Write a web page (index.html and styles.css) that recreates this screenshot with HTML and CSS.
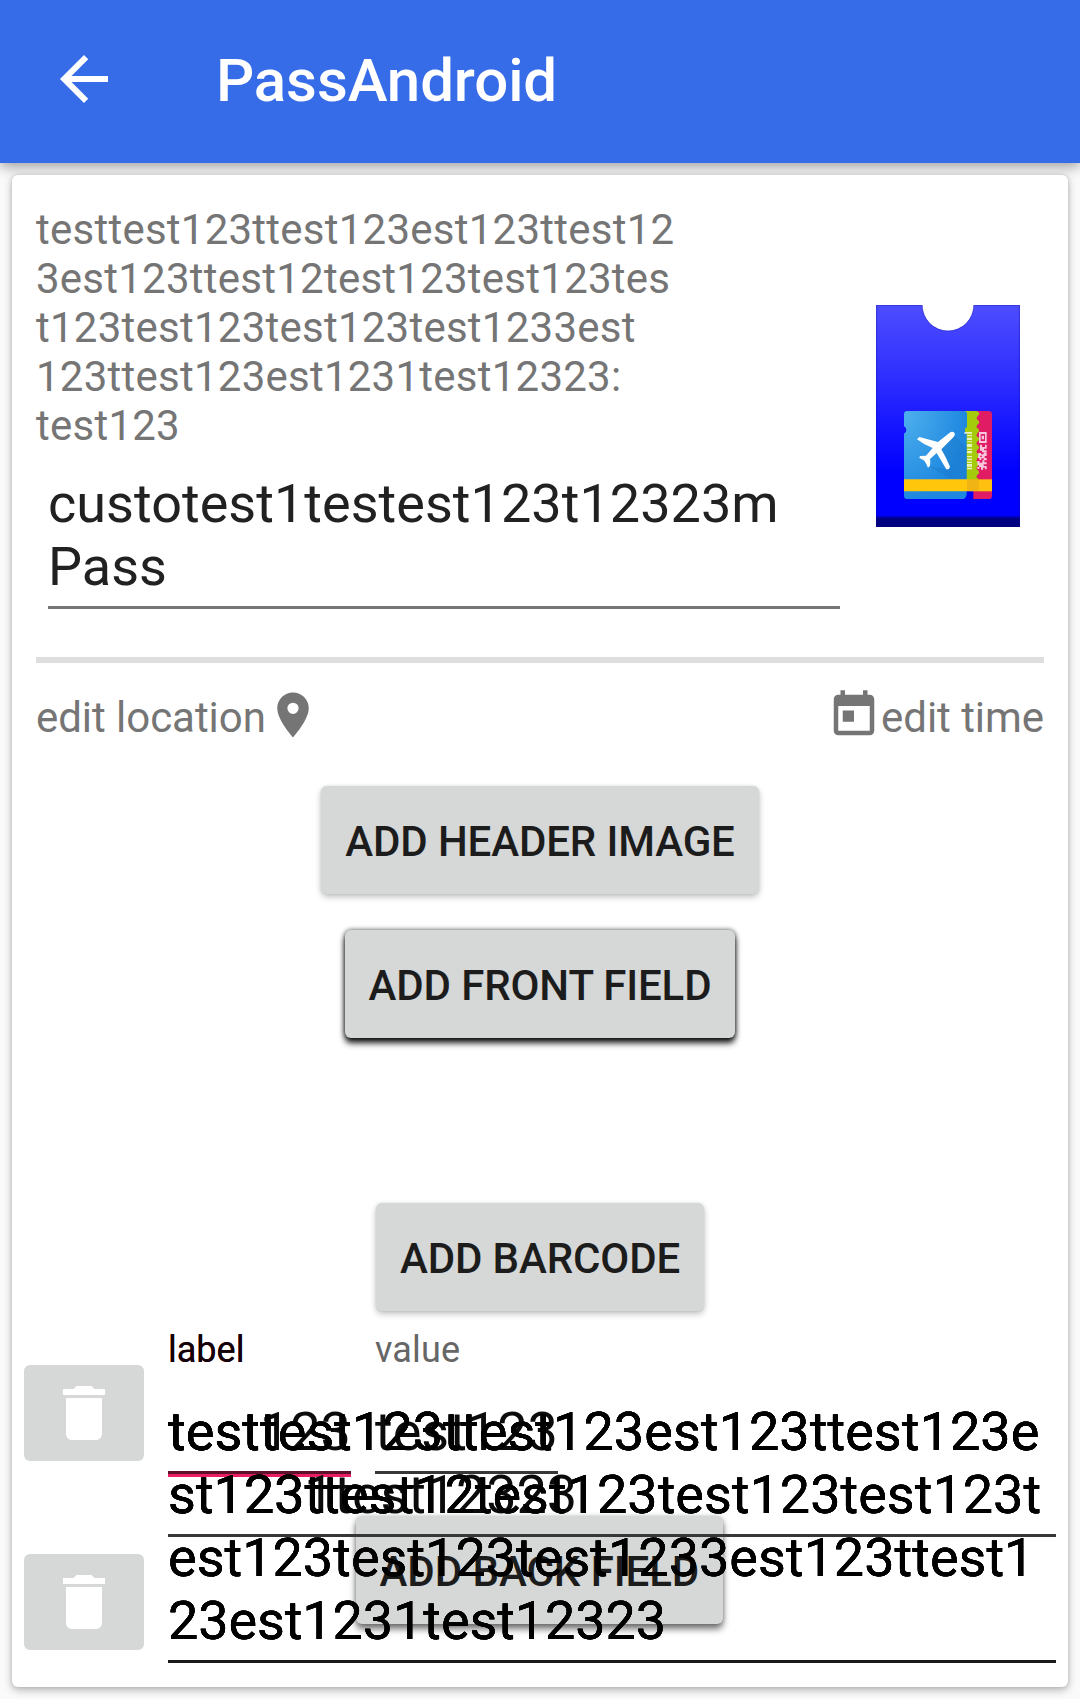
FILE: index.html
```html
<!DOCTYPE html>
<html lang="en">
<head>
<meta charset="utf-8">
<title>PassAndroid</title>
<link rel="stylesheet" href="styles.css">
</head>
<body>
<header class="toolbar">
  <svg class="icon-back" viewBox="0 0 24 24"><path fill="#fff" d="M20 11H7.83l5.59-5.59L12 4l-8 8 8 8 1.41-1.41L7.83 13H20v-2z"/></svg>
  <h1 class="title">PassAndroid</h1>
</header>
<main class="card">
  <section class="summary">
    <div class="summary-text">
      <p class="front-text">testtest123ttest123est123ttest12<br>3est123ttest12test123test123tes<br>t123test123test123test1233est<br>123ttest123est1231test12323:<br>test123</p>
      <div class="pass-name">custotest1testest123t12323m<br>Pass</div>
    </div>
    <svg class="ticket" viewBox="48 45 432 666">
      <defs>
        <linearGradient id="body" x1="0" y1="0" x2="0" y2="1"><stop offset="0" stop-color="#4d4dff"/><stop offset=".28" stop-color="#3333ff"/><stop offset=".75" stop-color="#0000ff"/></linearGradient>
        <radialGradient id="sky" cx="0" cy="0" r="1"><stop offset="0" stop-color="#4fb0ee"/><stop offset="1" stop-color="#1e88e0"/></radialGradient>
        <linearGradient id="edge" x1="0" y1="0" x2="0" y2="1"><stop offset="0" stop-color="#0000b0"/><stop offset=".3" stop-color="#000080"/></linearGradient>
      </defs>
      <path fill="url(#body)" d="M48 45h139a77 77 0 0 0 154 0h139v666H48z"/>
      <path fill="none" stroke="#00008b" stroke-opacity=".3" stroke-width="3" d="M50 711V46h137a77 77 0 0 0 154 0h137v665"/>
      <rect x="48" y="679" width="432" height="32" fill="url(#edge)"/>
      <path fill="#e01c64" d="M340 363h46q10 0 10 10v244q0 10-10 10h-46z"/>
      <path fill="#a4cc0a" d="M314 363h36q8 2 8 10-8 7-8 14 8 5 8 12-9 6-9 13 9 5 9 12-9 6-9 13 9 5 9 12-9 6-9 13 9 5 9 12-9 6-9 13 9 5 9 12-9 6-9 13 9 5 9 12-9 6-9 13 9 5 9 12-9 6-9 13 9 5 9 12v18q-6 10-14 10h-30z"/>
      <path fill="url(#sky)" d="M142 363h172q8 2 7 12v36a11 11 0 0 0-1 20v183q-2 10-10 13H142q-10 0-10-10V431a12 12 0 0 0 0-22v-36q0-10 10-10z"/>
      <path fill="#166bb8" fill-opacity=".25" d="M285 437l36 36v95h-48l-66-39 56 9-20-58z"/>
      <path fill="#fff" d="M269 428q5-4 11-2 6 3 4 10l-4 6-36 36q14 24 26 52l-4 8h-7l-29-49-20 18q2 8 0 20l-6 6q-6-14-11-21-7-5-15-8l2-6 18-1 20-23q-27-10-47-26l7-7 56 15z"/>
      <path fill="#fff" fill-opacity=".75" d="M313 426h23v5h-23zm8 9h15v4h-15zm0 8h15v7h-15zm0 11h15v3h-15zm0 8h15v9h-15zm0 14h15v4h-15zm0 7h15v7h-15zm0 15h15v4h-15zm0 8h15v5h-15zm0 9h15v4h-15zm0 7h15v8h-15zm0 11h15v5h-15z"/>
      <path fill="#f7c8e0" fill-rule="evenodd" d="M357 426h23v33h-23zm5 6v21h13v-21zM365 437h7v11h-7zM360 464h6v7h9v-7h5v12h-8v5h8v6h-14v-5h-6zM355 489h8v4h8v-7h9v12h-6v6h6v7h-9v-6h-7v5h-6v-6h-4zM352 513h7v5h8v-7h6v6h7v6h-9v5h9v10h-5v-5h-6v6h-6v-8h-5v6h-6v-6h5v-6h-5zM361 497h5v4h-5z"/>
      <path fill="#ffc60c" d="M132 568h189v36H132z"/><path fill="#f0b514" d="M321 568h36v36h-36z"/><path fill="#ffc010" d="M357 568h39v36h-39z"/>
    </svg>
  </section>
  <hr class="divider">
  <section class="meta">
    <div class="meta-item"><span>edit location</span><svg class="icon-small" viewBox="0 0 24 24"><path d="M12 2C8.13 2 5 5.13 5 9c0 5.25 7 13 7 13s7-7.75 7-13c0-3.87-3.13-7-7-7zm0 9.5a2.5 2.5 0 0 1 0-5 2.5 2.5 0 0 1 0 5z"/></svg></div>
    <div class="meta-item"><svg class="icon-small" viewBox="0 0 24 24"><path d="M19 3h-1V1h-2v2H8V1H6v2H5c-1.11 0-1.99.9-1.99 2L3 19c0 1.1.89 2 2 2h14c1.1 0 2-.9 2-2V5c0-1.1-.9-2-2-2zm0 16H5V8h14v11zM7 10h5v5H7z"/></svg><span>edit time</span></div>
  </section>
  <section class="actions">
    <button class="button">ADD HEADER IMAGE</button>
    <button class="button button-raised">ADD FRONT FIELD</button>
    <button class="button button-barcode">ADD BARCODE</button>
  </section>
  <section class="fields">
    <button class="button button-back">ADD BACK FIELD</button>
    <div class="delete-column">
      <button class="delete"><svg class="icon-delete" viewBox="0 0 24 24"><path d="M6 19c0 1.1.9 2 2 2h8c1.1 0 2-.9 2-2V7H6v12zM19 4h-3.5l-1-1h-5l-1 1H5v2h14V4z"/></svg></button>
      <button class="delete"><svg class="icon-delete" viewBox="0 0 24 24"><path d="M6 19c0 1.1.9 2 2 2h8c1.1 0 2-.9 2-2V7H6v12zM19 4h-3.5l-1-1h-5l-1 1H5v2h14V4z"/></svg></button>
    </div>
    <span class="hint hint-label">label</span>
    <span class="hint hint-value">value</span>
    <div class="field field-label">test123</div>
    <div class="field field-value">test123</div>
    <div class="field field-wide"><span class="first-line">testtest123ttest123est123ttest123e</span><br><span class="last-line">st1231test12323</span></div>
    <div class="field field-wide field-full"><span class="first-line">testtest123ttest123est123ttest123e</span><br>st123ttest12test123test123test123t<br>est123test123test1233est123ttest1<br><span class="last-line">23est1231test12323</span></div>
  </section>
</main>
</body>
</html>
```
FILE: styles.css
```css
* { box-sizing: border-box; }
body { margin: 0; height: 1699px; overflow: hidden; background: #fafafa; font-family: Roboto, "Noto Sans", sans-serif; color: #212121; }
.toolbar { position: relative; height: 163px; display: flex; align-items: center; padding: 0 48px 5px; gap: 96px; background: #366ce8; box-shadow: 0 4px 12px rgba(0,0,0,.3), 0 0 18px rgba(0,0,0,.1); }
.icon-back { width: 72px; height: 72px; }
.title { margin: 4px 0 0; font-size: 60px; line-height: 70px; font-weight: 500; letter-spacing: -.1px; color: #fff; }
.card { position: relative; margin: 12px 12px 0; height: 1512px; padding-top: 30px; border-radius: 6px; background: #fff; box-shadow: 0 3px 8px rgba(0,0,0,.28), 0 0 4px rgba(0,0,0,.12); }
.summary { display: flex; justify-content: space-between; padding: 0 48px 0 24px; }
.front-text { margin: 0 0 22px; font-size: 42px; line-height: 49px; letter-spacing: .245px; color: #757575; }
.pass-name { width: 792px; margin-left: 12px; padding-bottom: 8px; border-bottom: 3px solid #757575; font-size: 54px; line-height: 63px; letter-spacing: .03px; }
.ticket { width: 144px; height: 222px; margin-top: 100px; }
.divider { height: 6px; margin: 48px 24px 25px; border: 0; background: #dedede; }
.meta { display: flex; justify-content: space-between; padding: 0 24px; font-size: 42px; line-height: 54px; color: #757575; }
.meta-item { display: flex; height: 54px; }
.meta-item span { padding-top: 3px; letter-spacing: -.05px; }
.icon-small { width: 54px; height: 54px; fill: #757575; }
.actions { display: flex; flex-direction: column; align-items: center; gap: 36px; margin-top: 44px; }
.button { height: 108px; padding: 2px 24px 0; border: 0; border-radius: 6px; background: #d6d7d7; color: #1c1c1c; font: 500 42px/49px Roboto, "Noto Sans", sans-serif; letter-spacing: -.12px; white-space: nowrap; box-shadow: 0 3px 6px rgba(0,0,0,.24), 0 0 3px rgba(0,0,0,.1); }
.button-raised { box-shadow: 0 5px 6px rgba(0,0,0,.9), 0 0 5px rgba(0,0,0,.65); }
.button-barcode { margin-top: 129px; }
.fields { position: relative; height: 376px; }
.button-back { position: absolute; left: 343.5px; top: 205px; letter-spacing: -.05px; box-shadow: 0 5px 7px rgba(0,0,0,.55), 0 0 4px rgba(0,0,0,.2); }
.delete-column { display: flex; flex-direction: column; gap: 93px; padding: 54px 0 0 12px; }
.delete { display: flex; align-items: center; justify-content: center; width: 120px; height: 96px; padding: 0; border: 0; border-radius: 6px; background: #d6d7d7; }
.icon-delete { width: 72px; height: 72px; fill: #fff; }
.hint { position: absolute; top: 18px; font-size: 36px; line-height: 42px; }
.hint-label { left: 156px; color: #160008; text-shadow: 0 0 0 #160008; }
.hint-value { left: 363px; letter-spacing: .15px; color: #666; }
/* Fields share one origin, so their values and underlines stack. */
.field { position: absolute; left: 156px; top: 89px; padding-bottom: 8px; border-bottom: 3px solid #373737; font-size: 54px; line-height: 63px; color: #0b0b0b; white-space: nowrap; }
.field-label { width: 183px; border-bottom-color: #5e112a; box-shadow: 0 3px 0 #e91e63; }
.field-value { left: 363px; width: 183px; }
.field-wide { width: 888px; }
.field-full { border-bottom-color: #1a1a1a; color: #000; text-shadow: 0 0 0 #000, 0 0 0 #000, 0 0 0 #000; }
.first-line { letter-spacing: .05px; }
.last-line { letter-spacing: -.1px; }
```
